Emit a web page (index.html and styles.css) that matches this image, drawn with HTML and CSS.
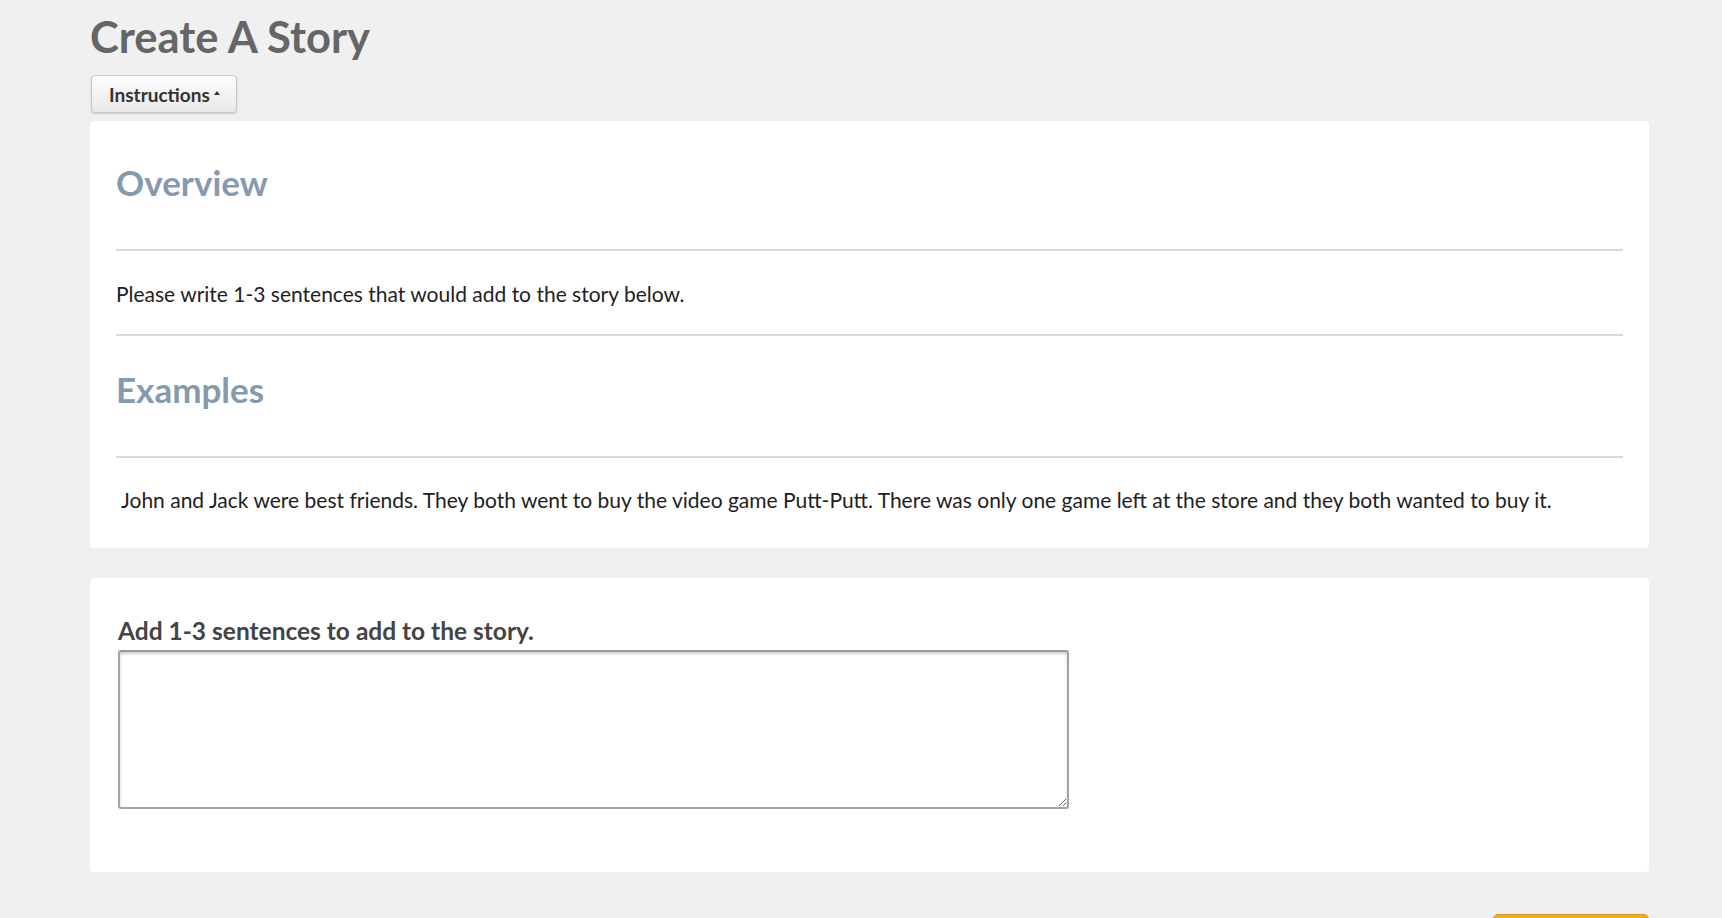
FILE: index.html
```html
<!DOCTYPE html>
<html lang="en">
<head>
<meta charset="utf-8">
<title>Create A Story</title>
<link rel="stylesheet" href="styles.css">
</head>
<body>
<div class="page">
  <h1 class="title">Create A Story</h1>
  <button class="btn-instructions" type="button">Instructions<span class="caret"></span></button>

  <section class="panel panel-instructions">
    <h2 class="section-heading heading-overview">Overview</h2>
    <hr class="rule rule-1">
    <p class="text text-overview">Please write 1-3 sentences that would add to the story below.</p>
    <hr class="rule rule-2">
    <h2 class="section-heading heading-examples">Examples</h2>
    <hr class="rule rule-3">
    <p class="text text-example">John and Jack were best friends. They both went to buy the video game Putt-Putt. There was only one game left at the store and they both wanted to buy it.</p>
  </section>

  <section class="panel panel-form">
    <label class="field-label" for="story">Add 1-3 sentences to add to the story.</label>
    <textarea id="story" class="field-text"></textarea>
  </section>

  <div class="actions">
    <button class="btn-submit" type="button" aria-label="Submit"></button>
  </div>
</div>
</body>
</html>
```

FILE: styles.css
```css
html, body {
  margin: 0;
  padding: 0;
}

body {
  background: #f0f0f1;
  font-family: Lato, "Open Sans", "Liberation Sans", sans-serif;
  color: #222;
  overflow: hidden;
}

.page {
  margin-left: 90px;
  width: 1559px;
  padding-top: 1px;
}

.title {
  margin: 9px 0 0 0;
  font-size: 43.5px;
  line-height: 52px;
  font-weight: 700;
  color: #666;
}

.btn-instructions {
  margin: 13px 0 0 1px;
  height: 38px;
  width: 146px;
  padding: 0 0 0 17px;
  display: flex;
  align-items: center;
  font-family: inherit;
  font-size: 19px;
  font-weight: 700;
  color: #333;
  background: linear-gradient(#ffffff, #e8e8e8);
  border: 1px solid #c6c6c6;
  border-radius: 4px;
  box-shadow: 0 1px 2px rgba(0, 0, 0, 0.15);
}

.caret {
  display: inline-block;
  width: 0;
  height: 0;
  margin-left: 4px;
  margin-bottom: 3px;
  border-left: 3.5px solid transparent;
  border-right: 3.5px solid transparent;
  border-bottom: 4px solid #333;
}

.panel {
  background: #fff;
  border-radius: 4px;
  box-shadow: 0 0 1px rgba(0, 0, 0, 0.06);
}

.panel-instructions {
  margin-top: 8px;
  padding: 40px 26px 36px 26px;
}

.section-heading {
  margin: 0;
  font-size: 35px;
  line-height: 42px;
  font-weight: 700;
  color: #8799ae;
}

.rule {
  margin: 0;
  border: 0;
  height: 2px;
  background: #d8d8de;
}

.rule-1 { margin-top: 46px; }

.text {
  margin: 0;
  font-size: 21px;
  line-height: 25px;
  color: #1e1e1e;
}

.text-overview { margin-top: 30px; }

.rule-2 { margin-top: 28px; }

.heading-examples { margin-top: 32px; }

.rule-3 { margin-top: 46px; }

.text-example {
  margin-top: 29px;
  padding-left: 5px;
}

.panel-form {
  margin-top: 30px;
  padding: 38px 28px 63px 28px;
}

.field-label {
  display: block;
  font-size: 24.5px;
  line-height: 29px;
  font-weight: 700;
  color: #444;
  margin-bottom: 5px;
}

.field-text {
  display: block;
  box-sizing: border-box;
  width: 951px;
  height: 159px;
  margin: 0;
  border: 2px solid #a2a2a8;
  border-top-color: #9a9aa0;
  border-radius: 3px;
  box-shadow: inset 0 2px 3px rgba(0, 0, 0, 0.2);
  background: #fff;
  font-family: inherit;
  font-size: 16px;
  resize: both;
}

.actions {
  display: flex;
  justify-content: flex-end;
  margin-top: 42px;
}

.btn-submit {
  width: 156px;
  height: 44px;
  padding: 0;
  background: #f5a623;
  border: 1px solid #e0951c;
  border-radius: 5px;
}
```
